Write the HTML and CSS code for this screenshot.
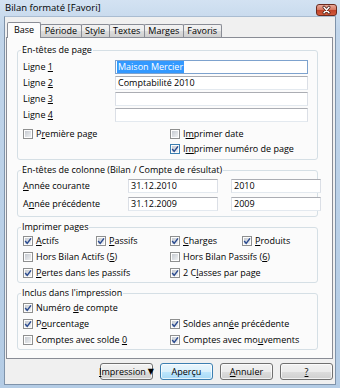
FILE: index.html
```html
<!DOCTYPE html>
<html lang="fr">
<head>
<meta charset="utf-8">
<title>Bilan formaté</title>
<link rel="stylesheet" href="styles.css">
</head>
<body>
<div class="window">
  <div class="titlebar">
    <span class="title">Bilan formaté [Favori]</span>
    <span class="close">
      <svg width="21" height="12" viewBox="0 0 21 12"><path d="M8 3.2 L13 8.8 M13 3.2 L8 8.8" stroke="#4a1d14" stroke-width="3" stroke-linecap="round"/><path d="M8 3.2 L13 8.8 M13 3.2 L8 8.8" stroke="#ffffff" stroke-width="1.5" stroke-linecap="round"/></svg>
    </span>
  </div>
  <div class="client">
    <div class="tabs">
      <div class="tab active">Base</div>
      <div class="tab">Période</div>
      <div class="tab">Style</div>
      <div class="tab">Textes</div>
      <div class="tab">Marges</div>
      <div class="tab">Favoris</div>
    </div>
    <div class="panel">
      <fieldset class="group g1">
        <legend>En-têtes de page</legend>
        <div class="lines">
          <span class="lbl">Ligne <u>1</u></span><span class="input focus"><span class="sel">Maison Mercier</span></span>
          <span class="lbl">Ligne <u>2</u></span><span class="input">Comptabilité 2010</span>
          <span class="lbl">Ligne <u>3</u></span><span class="input"></span>
          <span class="lbl">Ligne <u>4</u></span><span class="input"></span>
        </div>
        <div class="checks two">
          <span class="cbrow"><span class="cb"></span><span class="txt">P<u>r</u>emière page</span></span>
          <span class="cbrow"><span class="cb"></span><span class="txt">I<u>m</u>primer date</span></span>
          <span class="cbrow empty"></span>
          <span class="cbrow"><span class="cb on hot"><svg viewBox="0 0 10 10"><path d="M2.2 5 L4.2 7.4 L8 2.4"/></svg></span><span class="txt">I<u>m</u>primer numéro de page</span></span>
        </div>
      </fieldset>

      <fieldset class="group g2">
        <legend>En-têtes de colonne (Bilan / Compte de résultat)</legend>
        <div class="dates">
          <span class="lbl"><u>A</u>nnée courante</span><span class="input">31.12.2010</span><span class="input">2010</span>
          <span class="lbl">A<u>n</u>née précédente</span><span class="input">31.12.2009</span><span class="input">2009</span>
        </div>
      </fieldset>

      <fieldset class="group g3">
        <legend>Imprimer pages</legend>
        <div class="checks four">
          <span class="cbrow"><span class="cb on"><svg viewBox="0 0 10 10"><path d="M2.2 5 L4.2 7.4 L8 2.4"/></svg></span><span class="txt"><u>A</u>ctifs</span></span>
          <span class="cbrow"><span class="cb on"><svg viewBox="0 0 10 10"><path d="M2.2 5 L4.2 7.4 L8 2.4"/></svg></span><span class="txt"><u>P</u>assifs</span></span>
          <span class="cbrow"><span class="cb on"><svg viewBox="0 0 10 10"><path d="M2.2 5 L4.2 7.4 L8 2.4"/></svg></span><span class="txt"><u>C</u>harges</span></span>
          <span class="cbrow"><span class="cb on"><svg viewBox="0 0 10 10"><path d="M2.2 5 L4.2 7.4 L8 2.4"/></svg></span><span class="txt"><u>P</u>roduits</span></span>
          <span class="cbrow span2"><span class="cb"></span><span class="txt">Hors Bilan Actifs (<u>5</u>)</span></span>
          <span class="cbrow span2"><span class="cb"></span><span class="txt">Hors Bilan Passifs (<u>6</u>)</span></span>
          <span class="cbrow span2"><span class="cb on"><svg viewBox="0 0 10 10"><path d="M2.2 5 L4.2 7.4 L8 2.4"/></svg></span><span class="txt"><u>P</u>ertes dans les passifs</span></span>
          <span class="cbrow span2"><span class="cb on"><svg viewBox="0 0 10 10"><path d="M2.2 5 L4.2 7.4 L8 2.4"/></svg></span><span class="txt">2 C<u>l</u>asses par page</span></span>
        </div>
      </fieldset>

      <fieldset class="group g4">
        <legend>Inclus dans l'impression</legend>
        <div class="checks two">
          <span class="cbrow"><span class="cb on"><svg viewBox="0 0 10 10"><path d="M2.2 5 L4.2 7.4 L8 2.4"/></svg></span><span class="txt">Numéro <u>d</u>e compte</span></span>
          <span class="cbrow empty"></span>
          <span class="cbrow"><span class="cb on"><svg viewBox="0 0 10 10"><path d="M2.2 5 L4.2 7.4 L8 2.4"/></svg></span><span class="txt">P<u>o</u>urcentage</span></span>
          <span class="cbrow"><span class="cb on"><svg viewBox="0 0 10 10"><path d="M2.2 5 L4.2 7.4 L8 2.4"/></svg></span><span class="txt">Soldes ann<u>é</u>e précédente</span></span>
          <span class="cbrow"><span class="cb"></span><span class="txt">Comptes avec solde <u>0</u></span></span>
          <span class="cbrow"><span class="cb on"><svg viewBox="0 0 10 10"><path d="M2.2 5 L4.2 7.4 L8 2.4"/></svg></span><span class="txt">Comptes avec mo<u>u</u>vements</span></span>
        </div>
      </fieldset>
    </div>
    <div class="buttons">
      <span class="btn"><span class="txt"><u>I</u>mpression</span><span class="arrow">&#9660;</span></span>
      <span class="btn default"><span class="txt">Aperçu</span></span>
      <span class="btn"><span class="txt"><u>A</u>nnuler</span></span>
      <span class="btn"><span class="txt"><u>?</u></span></span>
    </div>
  </div>
</div>
</body>
</html>
```
FILE: styles.css
```css
html, body {
  margin: 0;
  padding: 0;
}
body {
  width: 340px;
  height: 388px;
  overflow: hidden;
  font-family: "Open Sans", "Noto Sans", sans-serif;
  font-size: 9px;
  color: #000;
}
.window {
  width: 340px;
  height: 388px;
  box-sizing: border-box;
  display: flex;
  flex-direction: column;
  padding: 0 4px 3px 4px;
  background: linear-gradient(to bottom, #d3e2f2 0, #c1d5ea 30px, #b4cce5 100%);
}
.titlebar {
  height: 16px;
  flex: none;
  display: flex;
  justify-content: space-between;
  align-items: center;
}
.title {
  padding-left: 1px;
  font-size: 9.5px;
  line-height: 12px;
  color: #000;
}
.close {
  align-self: flex-end;
  width: 21px;
  height: 12px;
  margin-right: -1px;
  box-sizing: border-box;
  border: 1px solid #6b2a1e;
  border-radius: 3px;
  background: linear-gradient(to bottom, #e9a99b 0%, #d77a64 45%, #c2452b 55%, #d35b3d 100%);
  display: flex;
  align-items: center;
  justify-content: center;
}
.close svg {
  display: block;
  margin: -1px;
}
.client {
  flex: 1;
  display: flex;
  flex-direction: column;
  background: #f0f0f0;
  border: 1px solid #7f93aa;
  border-top-color: #a9bcd1;
}
.tabs {
  position: relative;
  z-index: 2;
  height: 21px;
  display: flex;
  align-items: flex-end;
  padding-left: 4px;
}
.tab {
  height: 13px;
  box-sizing: border-box;
  margin-bottom: 1px;
  margin-left: -1px;
  padding: 0 3.5px;
  border: 1px solid #898c95;
  border-bottom: none;
  border-radius: 2px 2px 0 0;
  background: linear-gradient(to bottom, #f2f2f2 0%, #ebebeb 50%, #dddddd 51%, #cfcfcf 100%);
  line-height: 11px;
  white-space: nowrap;
}
.tab.active {
  height: 16px;
  margin-bottom: 0;
  margin-left: -2px;
  margin-right: -2px;
  padding: 0 6px;
  background: #fcfcfc;
  line-height: 14px;
  position: relative;
  z-index: 3;
}
.tab.active + .tab {
  margin-left: 1px;
}
.panel {
  position: relative;
  z-index: 1;
  height: 322px;
  box-sizing: border-box;
  margin: -1px 2px 0 1px;
  border: 1px solid #898c95;
  background: #fbfbfb;
  padding-top: 6px;
}
.group {
  width: 301px;
  box-sizing: border-box;
  min-width: 0;
  margin: 4px 0 0 10px;
  padding: 0 8px 1px 5px;
  border: 1px solid #d5dfe5;
  border-radius: 3px;
}
.group.g1 {
  margin-top: 0;
  padding-top: 4px;
  padding-bottom: 3px;
}
.group.g2 {
  padding-top: 3px;
  padding-bottom: 5px;
}
.group.g3 {
  padding-top: 0;
}
.group.g4 {
  padding-top: 1px;
}
legend {
  padding: 0 1px;
  margin-left: -2px;
  line-height: 12px;
}
.lines {
  display: grid;
  grid-template-columns: 92px 193px;
  grid-auto-rows: 14px;
  row-gap: 2px;
  align-items: center;
}
.dates {
  display: grid;
  grid-template-columns: 92px 90px 90px;
  column-gap: 13px;
  grid-auto-rows: 14px;
  row-gap: 4px;
  align-items: center;
}
.lbl {
  line-height: 12px;
  white-space: nowrap;
}
.input {
  height: 14px;
  box-sizing: border-box;
  display: block;
  background: #fff;
  border: 1px solid #dbdfe6;
  border-top-color: #abadb3;
  border-bottom-color: #e3e9ef;
  padding-left: 2px;
  line-height: 12px;
  white-space: nowrap;
  overflow: hidden;
}
.input.focus {
  border-color: #7da2ce;
  padding-left: 1px;
}
.sel {
  background: #3399ff;
  color: #fff;
  padding: 0 1px;
}
.checks {
  display: grid;
  grid-auto-rows: 16px;
  align-items: center;
}
.checks.two {
  grid-template-columns: 147px 1fr;
}
.g1 .checks {
  margin-top: 4px;
  grid-auto-rows: 15px;
}
.checks.four {
  grid-template-columns: 73px 74px 72px 1fr;
}
.span2 {
  grid-column: span 2;
}
.cbrow {
  display: flex;
  align-items: center;
  gap: 3px;
  white-space: nowrap;
  line-height: 12px;
}
.txt {
  white-space: nowrap;
}
.cb {
  width: 10px;
  height: 10px;
  flex: none;
  box-sizing: border-box;
  border: 1px solid #8e8f8f;
  background:
    linear-gradient(135deg, #c6cad0 0%, #eef0f2 100%) content-box,
    #fdfdfd;
  padding: 1px;
  position: relative;
}
.cb.hot {
  border-color: #3c7fb1;
}
.cb svg {
  position: absolute;
  left: -1px;
  top: -1px;
  width: 10px;
  height: 10px;
}
.cb svg path {
  fill: none;
  stroke: #2a4a8f;
  stroke-width: 1.5;
}
.buttons {
  display: flex;
  justify-content: flex-end;
  gap: 7px;
  margin: 4px 2px 0 0;
}
.btn {
  width: 53px;
  height: 17px;
  box-sizing: border-box;
  display: flex;
  align-items: center;
  justify-content: center;
  gap: 2px;
  border: 1px solid #707070;
  border-radius: 3px;
  background: linear-gradient(to bottom, #f2f2f2 0%, #ebebeb 50%, #dddddd 51%, #cfcfcf 100%);
  box-shadow: inset 0 0 0 1px rgba(255,255,255,0.7);
  white-space: nowrap;
}
.btn.default {
  border-color: #3c7fb1;
  background: linear-gradient(to bottom, #eaf6fd 0%, #d9f0fc 50%, #bee6fd 51%, #a7d9f5 100%);
}
.arrow {
  font-size: 8px;
  font-family: "DejaVu Sans", sans-serif;
}
```
